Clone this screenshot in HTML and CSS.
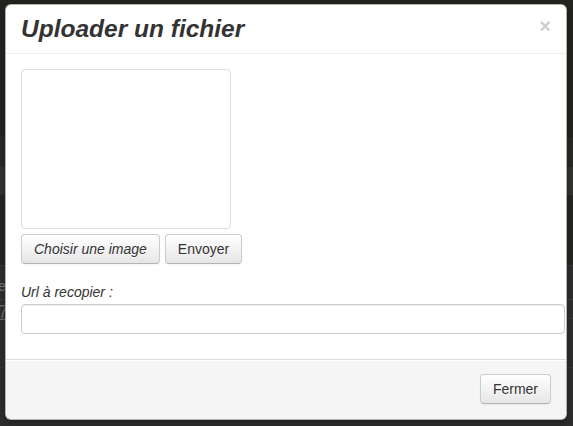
FILE: index.html
```html
<!DOCTYPE html>
<html lang="fr">
<head>
<meta charset="utf-8">
<title>Uploader un fichier</title>
<link rel="stylesheet" href="styles.css">
</head>
<body>
<div class="page">
  <span class="page-e">e</span>
  <span class="page-7">7</span>
</div>
<div class="modal">
  <div class="modal-header">
    <button class="close" type="button">×</button>
    <h3 class="title">Uploader un fichier</h3>
  </div>
  <div class="modal-body">
    <div class="preview"></div>
    <div class="actions">
      <button class="btn btn-italic" type="button">Choisir une image</button>
      <button class="btn" type="button">Envoyer</button>
    </div>
    <label class="url-label" for="url">Url à recopier :</label>
    <input class="url-input" id="url" type="text">
  </div>
  <div class="modal-footer">
    <button class="btn" type="button">Fermer</button>
  </div>
</div>
</body>
</html>
```

FILE: styles.css
```css
html, body {
  margin: 0;
  height: 100%;
}

body {
  font-family: "Liberation Sans", Arial, sans-serif;
  font-size: 14px;
  line-height: 20px;
  color: #333;
  background: #2d2d2d;
  overflow: hidden;
}

.page {
  position: absolute;
  inset: 0;
  background: linear-gradient(to bottom,
    #24231f 0, #24231f 137px,
    #292824 137px, #292824 167px,
    #33322e 167px, #33322e 195px,
    #272622 195px, #272622 265px,
    #3a3a3a 265px, #3a3a3a 266px,
    #2e2e2e 266px, #2e2e2e 299px,
    #3c3c3c 299px, #3c3c3c 300px,
    #2e2e2e 300px, #2e2e2e 318px,
    #3a3a3a 318px, #3a3a3a 319px,
    #2d2d2d 319px, #2d2d2d 367px,
    #353535 367px, #353535 368px,
    #2d2d2d 368px);
}

.page-e,
.page-7 {
  position: absolute;
  left: -2px;
  font-size: 14px;
  color: #7a7a7a;
}

.page-e {
  top: 276px;
}

.page-7 {
  top: 302px;
  font-size: 18px;
  color: #6a6a6a;
  text-decoration: underline;
}

.modal {
  position: absolute;
  left: 5px;
  top: 4px;
  width: 560px;
  background: #fff;
  border: 1px solid rgba(0, 0, 0, 0.3);
  border-radius: 6px;
  box-shadow: 0 3px 7px rgba(0, 0, 0, 0.3);
}

.modal-header {
  padding: 9px 15px;
  border-bottom: 1px solid #eee;
}

.title {
  margin: 0;
  font-size: 24.5px;
  line-height: 30px;
  font-weight: bold;
  font-style: italic;
  color: #333;
}

.close {
  float: right;
  margin-top: 2px;
  padding: 0;
  border: 0;
  background: transparent;
  font-family: "Liberation Sans", Arial, sans-serif;
  font-size: 20px;
  font-weight: bold;
  line-height: 20px;
  color: #000;
  opacity: 0.2;
  text-shadow: 0 1px 0 #fff;
  cursor: pointer;
}

.modal-body {
  padding: 15px;
}

.preview {
  width: 208px;
  height: 158px;
  border: 1px solid #ddd;
  border-radius: 4px;
  margin-bottom: 5px;
}

.actions {
  display: flex;
  gap: 5px;
}

.btn {
  display: inline-block;
  padding: 4px 12px;
  font-family: "Liberation Sans", Arial, sans-serif;
  font-size: 14px;
  line-height: 20px;
  color: #333;
  text-align: center;
  text-shadow: 0 1px 1px rgba(255, 255, 255, 0.75);
  background-color: #f5f5f5;
  background-image: linear-gradient(to bottom, #ffffff, #e6e6e6);
  border: 1px solid #cccccc;
  border-bottom-color: #b3b3b3;
  border-radius: 4px;
  box-shadow: inset 0 1px 0 rgba(255, 255, 255, 0.2), 0 1px 2px rgba(0, 0, 0, 0.05);
  cursor: pointer;
}

.btn-italic {
  font-style: italic;
}

.url-label {
  display: block;
  margin-top: 18px;
  margin-bottom: 2px;
  font-style: italic;
}

.url-input {
  display: block;
  box-sizing: content-box;
  width: 100%;
  height: 20px;
  padding: 4px 6px;
  margin: 0 0 10px;
  font-family: "Liberation Sans", Arial, sans-serif;
  font-size: 14px;
  line-height: 20px;
  color: #555;
  background: #fff;
  border: 1px solid #ccc;
  border-radius: 4px;
  box-shadow: inset 0 1px 1px rgba(0, 0, 0, 0.075);
}

.modal-footer {
  padding: 14px 15px 15px;
  text-align: right;
  background: #f5f5f5;
  border-top: 1px solid #ddd;
  border-radius: 0 0 6px 6px;
  box-shadow: inset 0 1px 0 #fff;
}
```
